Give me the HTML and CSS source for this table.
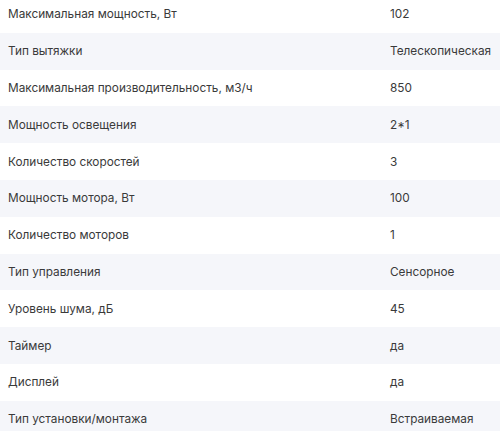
FILE: index.html
```html
<!DOCTYPE html>
<html lang="ru">
<head>
<meta charset="utf-8">
<link rel="stylesheet" href="styles.css">
</head>
<body>
<div class="specs">
  <div class="row"><div class="name">Максимальная мощность, Вт</div><div class="val">102</div></div>
  <div class="row"><div class="name">Тип вытяжки</div><div class="val">Телескопическая</div></div>
  <div class="row"><div class="name">Максимальная производительность, м3/ч</div><div class="val">850</div></div>
  <div class="row"><div class="name">Мощность освещения</div><div class="val">2*1</div></div>
  <div class="row"><div class="name">Количество скоростей</div><div class="val">3</div></div>
  <div class="row"><div class="name">Мощность мотора, Вт</div><div class="val">100</div></div>
  <div class="row"><div class="name">Количество моторов</div><div class="val">1</div></div>
  <div class="row"><div class="name">Тип управления</div><div class="val">Сенсорное</div></div>
  <div class="row"><div class="name">Уровень шума, дБ</div><div class="val">45</div></div>
  <div class="row"><div class="name">Таймер</div><div class="val">да</div></div>
  <div class="row"><div class="name">Дисплей</div><div class="val">да</div></div>
  <div class="row"><div class="name">Тип установки/монтажа</div><div class="val">Встраиваемая</div></div>
</div>
</body>
</html>
```
FILE: styles.css
```css
html, body {
  margin: 0;
  padding: 0;
  background: #fff;
}
body {
  font-family: Inter, "Noto Sans", sans-serif;
  font-size: 11.8px;
  color: #3a3a3a;
  overflow: hidden;
}
.specs {
  margin-top: -4px;
  display: flex;
  flex-direction: column;
}
.row {
  display: grid;
  grid-template-columns: 390px 1fr;
  height: 36.8px;
  align-items: center;
}
.row:nth-child(even) {
  background: #f5f6fa;
}
.name {
  padding-left: 8px;
}
```
